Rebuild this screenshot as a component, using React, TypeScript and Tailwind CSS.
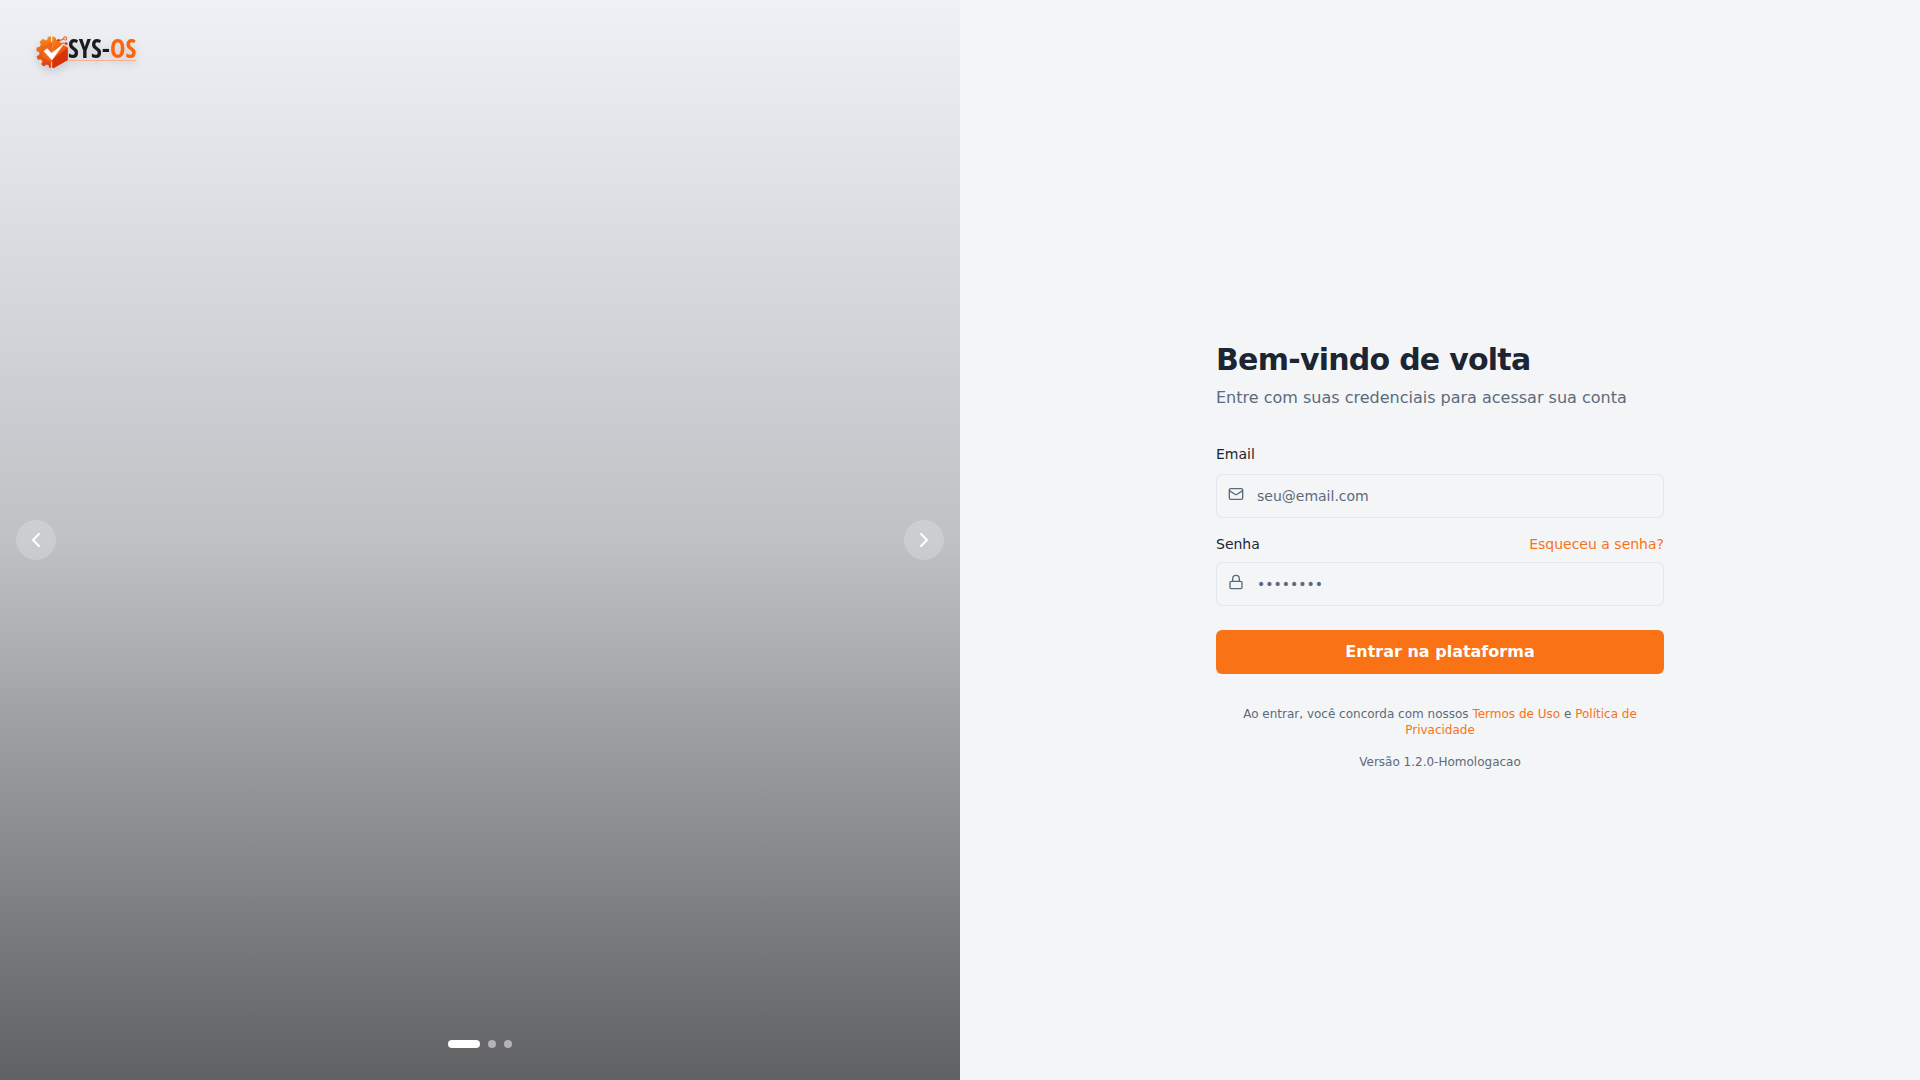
import { useState } from "react";
import { ChevronLeft, ChevronRight, Lock, Mail } from "lucide-react";

const SLIDES = ["Slide 1", "Slide 2", "Slide 3"];

function LogoMark() {
  return (
    <svg viewBox="0 0 92 92" className="size-8" aria-hidden="true">
      <defs>
        <linearGradient id="gear" x1="0" y1="0" x2="0" y2="1">
          <stop offset="0" stopColor="#f98a1c" />
          <stop offset="1" stopColor="#e03a0c" />
        </linearGradient>
        <linearGradient id="cube" x1="0" y1="0" x2="0.3" y2="1">
          <stop offset="0" stopColor="#fb8a12" />
          <stop offset="0.6" stopColor="#f4560c" />
          <stop offset="1" stopColor="#cf2a06" />
        </linearGradient>
      </defs>
      <path
        d="M43 1 L34 3 L33 10 L27 13 L20 8 L10 17 L14 24 L11 31 L2 33 L1 43 L9 46 L10 53 L2 58 L5 68 L14 67 L19 73 L15 81 L23 88 L30 82 L36 84 L38 91 L43 91 Z"
        fill="url(#gear)"
      />
      <path d="M47 1 L56 4 L58 11 L66 14 L72 22 L91 32 V69 L52 91 H47 Z" fill="url(#cube)" />
      <path d="M47 16 L18 32 V60 L47 76 Z" fill="#f2651a" />
      <path d="M47 68 L91 34 V69 L52 91 H47 Z" fill="#d83208" />
      <path d="M22 44 L32 35 L45 49 L84 18 L46 70 Z" fill="#fff" />
      <path d="M62 12 H72 L80 7 M70 21 H84" stroke="#e4501c" strokeWidth="3" fill="none" />
      <circle cx="84" cy="7" r="4.5" fill="none" stroke="#ee6b22" strokeWidth="3" />
      <circle cx="65" cy="12" r="3.5" fill="#d8401a" />
      <circle cx="87" cy="22" r="4" fill="#d8401a" />
    </svg>
  );
}

function Logo() {
  return (
    <div className="flex items-start drop-shadow-lg">
      <LogoMark />
      <div className="border-b border-[#f7b08f] font-['Open_Sans_Condensed','Roboto_Condensed',sans-serif] text-[26px] leading-6 font-bold text-[#1b1b1d]">
        SYS-<span className="text-[#ff6208]">OS</span>
      </div>
    </div>
  );
}

function Showcase() {
  const [active, setActive] = useState(0);
  const move = (step: number) => setActive((active + step + SLIDES.length) % SLIDES.length);
  const arrow = "flex size-10 items-center justify-center rounded-full bg-white/20 text-white";
  return (
    <section className="hidden grid-rows-[1fr_auto_1fr] bg-[#eff1f6] bg-linear-to-t from-black/60 via-black/20 to-transparent lg:grid">
      <div className="flex items-start px-9 pt-9">
        <Logo />
      </div>
      <div className="flex justify-between px-4">
        <button type="button" aria-label="Anterior" className={arrow} onClick={() => move(-1)}>
          <ChevronLeft className="size-6" />
        </button>
        <button type="button" aria-label="Próximo" className={arrow} onClick={() => move(1)}>
          <ChevronRight className="size-6" />
        </button>
      </div>
      <div className="flex items-end justify-center gap-2 pb-8">
        {SLIDES.map((name, i) => (
          <button
            key={name}
            type="button"
            aria-label={name}
            onClick={() => setActive(i)}
            className={i === active ? "h-2 w-8 rounded-full bg-white" : "size-2 rounded-full bg-white/50"}
          />
        ))}
      </div>
    </section>
  );
}

const field =
  "h-11 w-full rounded-md border border-[#e1e7ef] bg-transparent pr-3 pl-10 text-sm text-[#1c2532] placeholder:text-[#5b6b7c] placeholder:opacity-100 focus:outline-2 focus:outline-[#f97316]";

export default function App() {
  return (
    <main className="grid min-h-screen bg-[#f4f5f7] font-['DejaVu_Sans',sans-serif] text-[#1c2532] lg:grid-cols-2">
      <Showcase />
      <section className="flex items-center justify-center px-8">
        <div className="w-full max-w-md pt-8">
          <h1 className="text-3xl font-bold tracking-tight">Bem-vindo de volta</h1>
          <p className="mt-2 text-base text-[#5b6b7c]">Entre com suas credenciais para acessar sua conta</p>

          <form className="mt-8" onSubmit={(e) => e.preventDefault()}>
            <label htmlFor="email" className="block text-sm leading-6">
              Email
            </label>
            <div className="relative mt-2">
              <Mail className="absolute top-3 left-3 size-4 text-[#5b6b7c]" />
              <input id="email" type="email" placeholder="seu@email.com" className={field} />
            </div>

            <div className="mt-4 flex items-center justify-between text-sm">
              <label htmlFor="senha">Senha</label>
              <a href="#recuperar" className="text-[#f97316]">
                Esqueceu a senha?
              </a>
            </div>
            <div className="relative mt-2">
              <Lock className="absolute top-3 left-3 size-4 text-[#5b6b7c]" />
              <input id="senha" type="password" placeholder="••••••••" className={field} />
            </div>

            <button type="submit" className="mt-6 h-11 w-full rounded-md bg-[#f97316] text-base font-semibold text-white">
              Entrar na plataforma
            </button>
          </form>

          <div className="mt-8 space-y-4 text-center text-xs text-[#5b6b7c]">
            <p className="px-6">
              Ao entrar, você concorda com nossos{" "}
              <a href="#termos" className="text-[#f97316]">
                Termos de Uso
              </a>{" "}
              e{" "}
              <a href="#privacidade" className="text-[#f97316]">
                Política de Privacidade
              </a>
            </p>
            <p>Versão 1.2.0-Homologacao</p>
          </div>
        </div>
      </section>
    </main>
  );
}
